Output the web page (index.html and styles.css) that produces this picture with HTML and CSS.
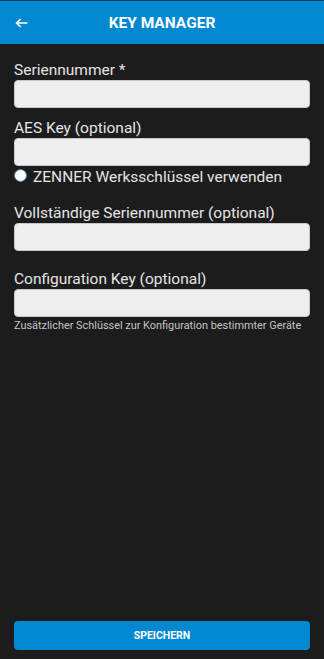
FILE: index.html
```html
<!DOCTYPE html>
<html lang="de">
<head>
<meta charset="utf-8">
<link rel="stylesheet" href="styles.css">
</head>
<body>
<div class="app">
  <header class="topbar">
    <svg class="back" width="13" height="10" viewBox="0 0 13 10"><path d="M12.5 5H1.6M5.6 1L1.6 5l4 4" fill="none" stroke="#fff" stroke-width="1.6"/></svg>
    <h1 class="title">KEY MANAGER</h1>
  </header>
  <main class="form">
    <label class="label l1">Seriennummer *</label>
    <div class="input"></div>
    <label class="label l2">AES Key (optional)</label>
    <div class="input"></div>
    <div class="radio-row"><span class="radio"></span><span>ZENNER Werksschlüssel verwenden</span></div>
    <label class="label l3">Vollständige Seriennummer (optional)</label>
    <div class="input"></div>
    <label class="label l4">Configuration Key (optional)</label>
    <div class="input"></div>
    <div class="helper">Zusätzlicher Schlüssel zur Konfiguration bestimmter Geräte</div>
  </main>
  <div class="footer"><button class="save">SPEICHERN</button></div>
</div>
</body>
</html>
```
FILE: styles.css
```css
html, body { margin: 0; padding: 0; }
* { box-sizing: border-box; }
body { background: #1c1c1c; font-family: Roboto, "Noto Sans", sans-serif; }
.app { height: 659px; display: flex; flex-direction: column; }
.topbar {
  height: 44px; flex: none; background: #0288d1; border-top: 1px solid #0d3b5a;
  display: flex; align-items: center; position: relative;
}
.back { margin-left: 15px; margin-top: 0; }
.title {
  position: absolute; left: 0; right: 0; top: 0; bottom: 0; margin: 0;
  display: flex; align-items: center; justify-content: center;
  color: #fff; font-size: 15.5px; font-weight: 700;
}
.form { flex: 1; padding: 0 14px; display: flex; flex-direction: column; }
.label { display: block; color: #e4e4e4; font-size: 15.5px; line-height: 18px; margin-bottom: 1px; }
.l1 { margin-top: 17px; }
.l2 { margin-top: 11px; }
.l3 { margin-top: 18px; }
.l4 { margin-top: 19px; }
.input { height: 28px; background: #eeeeee; border: 1px solid #c8c8c8; border-radius: 4px; }
.radio-row { display: flex; align-items: flex-start; gap: 6px; color: #e4e4e4; font-size: 15.5px; line-height: 18px; margin-top: 2px; }
.radio { width: 13px; height: 13px; margin-top: 1px; border-radius: 50%; background: #fff; border: 1.5px solid #3a7fae; flex: none; }
.helper { color: #c4c4c4; font-size: 10.9px; line-height: 13px; margin-top: 2px; }
.footer { padding: 0 14px 9px; flex: none; }
.save {
  width: 100%; height: 29px; border: 0; border-radius: 4px; background: #0288d1;
  color: #fff; font-family: Roboto, sans-serif; font-weight: 700; font-size: 10.5px; display: block;
}
```
